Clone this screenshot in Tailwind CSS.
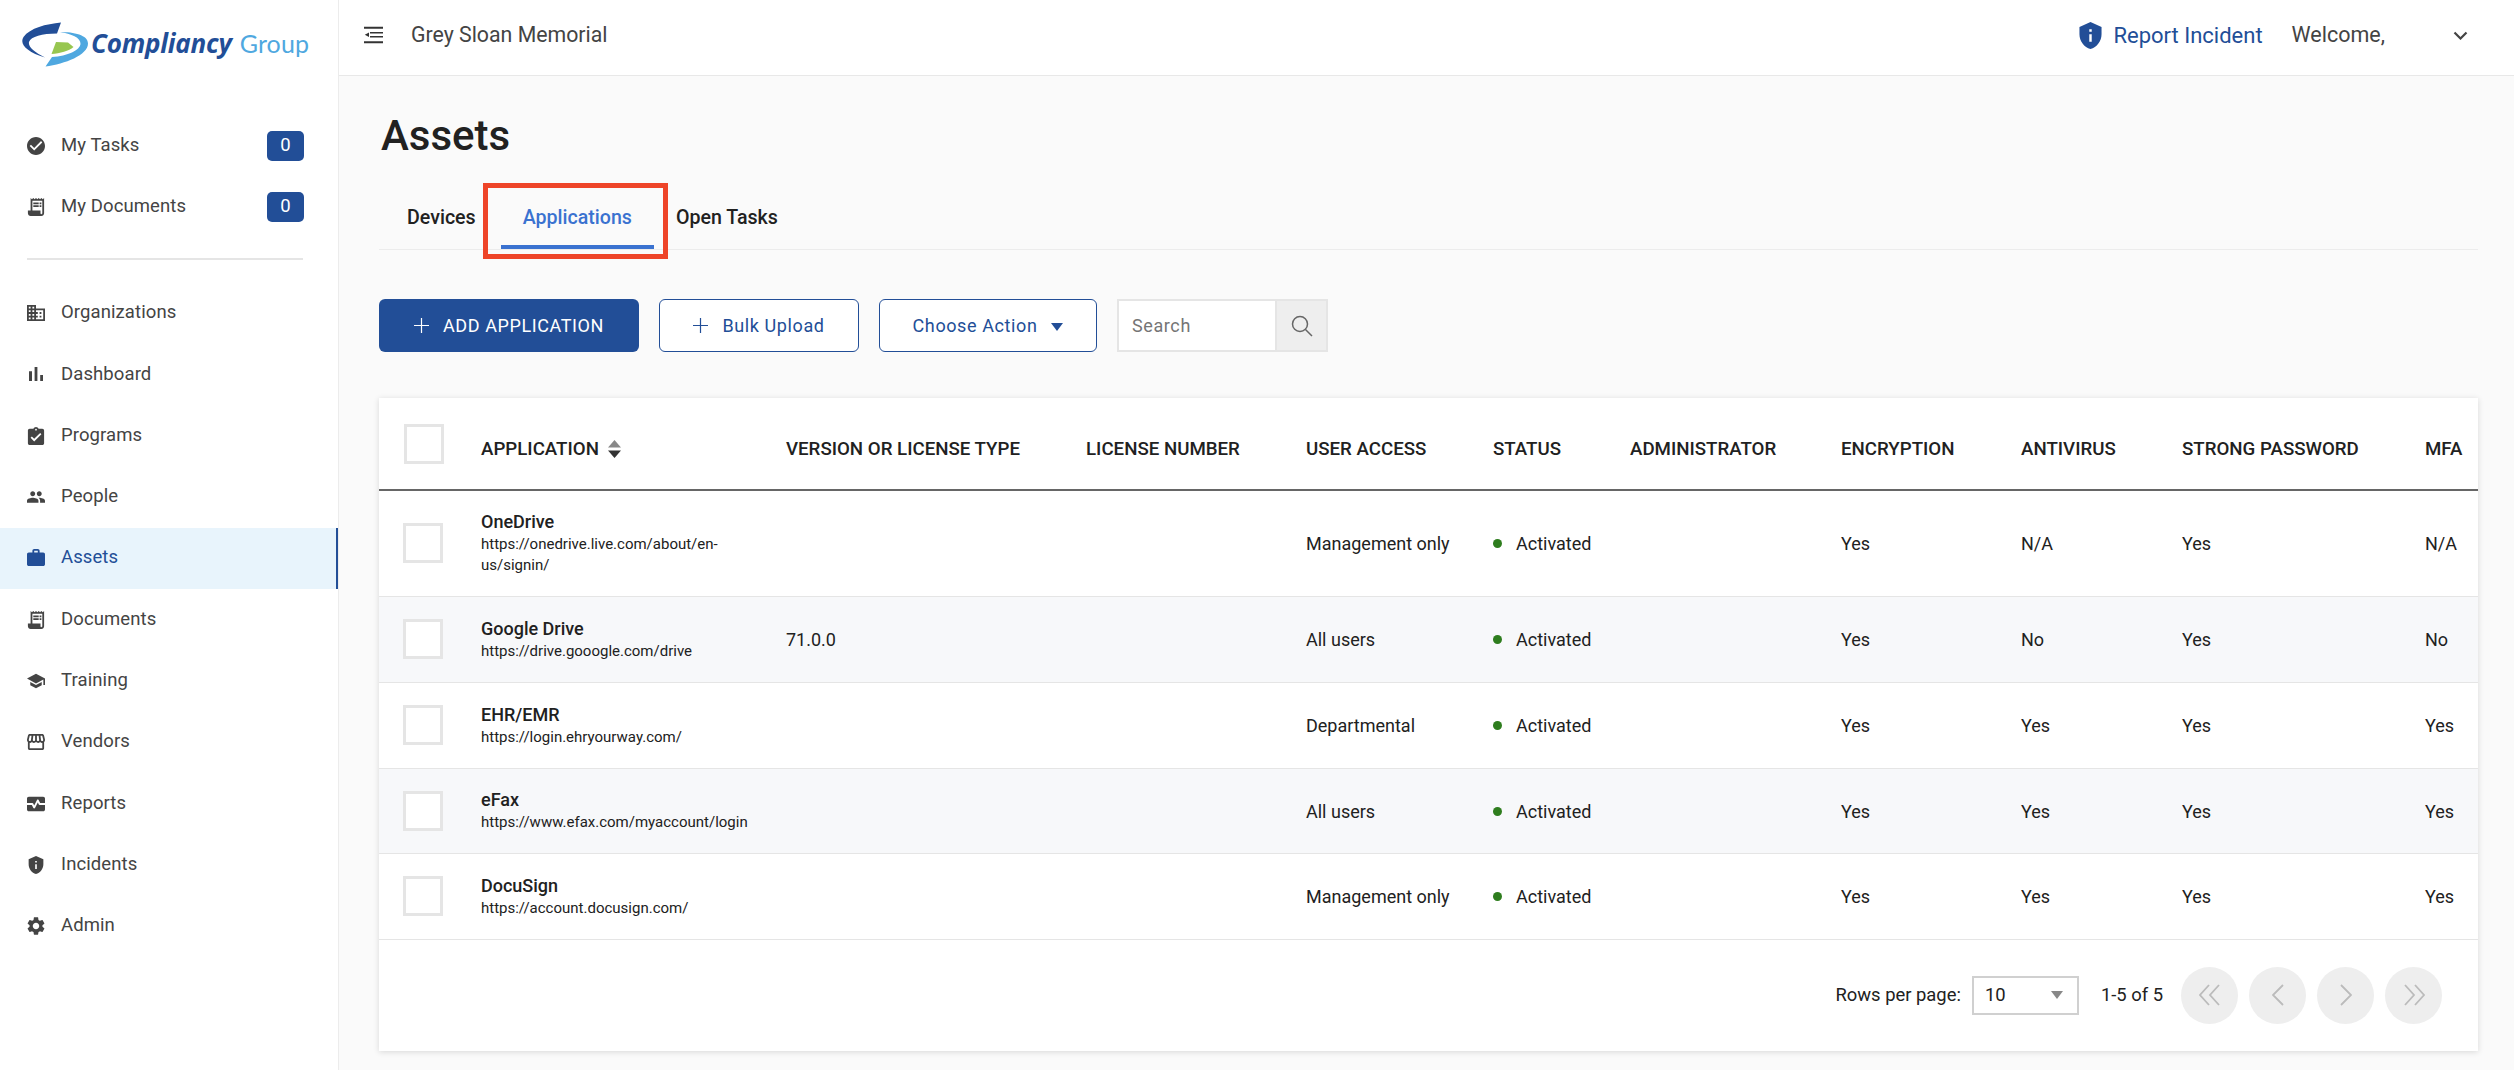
<!DOCTYPE html>
<html lang="en">
<head>
    <meta charset="UTF-8">
    <meta name="viewport" content="width=device-width, initial-scale=1.0">
    <title>Assets - Applications</title>
    <script src="https://cdn.jsdelivr.net/npm/@tailwindcss/browser@4"></script>
</head>
<body class="flex h-screen overflow-hidden bg-[#fafafa] text-[#212121] font-['Roboto',sans-serif]">
    <!-- sidebar -->
    <aside class="w-[339px] shrink-0 bg-white border-r border-[#ececec] text-[18.500px] tracking-[0.1px] text-[#444]">
        <div class="h-[76px] flex items-center pl-[21px] pt-[13px]">
            <svg class="w-[68px] h-[46px]" viewBox="21 22 68 46">
                <path d="M61 22.500C46 24 30 28 23.500 37C19 44 27 52 45 57.500C34 52 28 47 29 42C31 36.500 42 33.500 57 33.500Z" fill="#224e97"/>
                <path d="M60 32C74 32 88 35 88 43.500C88 55 65 64 45.500 66.500L52 57C68 56 80 50 80.500 44C81 37.500 71 34 60 32Z" fill="#4fa8e0"/>
                <path d="M56 42L68 42.500L73.500 47C69 51 60 53.500 51.500 54Z" fill="#97c650"/>
            </svg>
            <span class="ml-[2px] mb-[3px] text-[26px] leading-none font-bold italic text-[#224e97] font-['Open_Sans',sans-serif] tracking-[-0.2px]">Compliancy</span>
            <span class="ml-[8px] mb-[3px] text-[25px] leading-none text-[#4fa8e0] font-['Lato',sans-serif]">Group</span>
        </div>
        <nav class="pt-[39px]">
            <a class="h-[61px] flex items-center pl-[27px] pr-[34px]">
                <svg class="w-[18px] h-[18px] fill-[#444]" viewBox="2 2 20 20"><path d="M12 2C6.480 2 2 6.480 2 12s4.480 10 10 10 10-4.480 10-10S17.520 2 12 2zm-2 15l-5-5 1.410-1.410L10 14.170l7.590-7.590L19 8l-9 9z"/></svg>
                <span class="ml-[16px]">My Tasks</span>
                <span class="ml-auto w-[37px] h-[30px] rounded-[5px] bg-[#224e97] text-white flex items-center justify-center">0</span>
            </a>
            <a class="h-[61px] flex items-center pl-[27px] pr-[34px]">
                <svg class="w-[18px] h-[18px] fill-[#444]" viewBox="3 2 18 20"><path d="M19.500 3.500L18 2l-1.500 1.500L15 2l-1.500 1.500L12 2l-1.500 1.500L9 2 7.500 3.500 6 2v14H3v3c0 1.660 1.340 3 3 3h12c1.660 0 3-1.340 3-3V2l-1.500 1.500zM19 19c0 .55-.45 1-1 1s-1-.45-1-1v-3H8V5h11v14z"/><path d="M9 7h6v2H9zm7 0h2v2h-2zM9 10h6v2H9zm7 0h2v2h-2z"/></svg>
                <span class="ml-[16px]">My Documents</span>
                <span class="ml-auto w-[37px] h-[30px] rounded-[5px] bg-[#224e97] text-white flex items-center justify-center">0</span>
            </a>
            <div class="mt-[21px] mb-[22.500px] ml-[27px] mr-[35px] h-[2px] bg-[#e5e5e5]"></div>
            <a class="h-[61.300px] flex items-center pl-[27px]">
                <svg class="w-[18px] h-[18px] fill-[#444]" viewBox="2 3 20 18"><path d="M12 7V3H2v18h20V7H12zM6 19H4v-2h2v2zm0-4H4v-2h2v2zm0-4H4V9h2v2zm0-4H4V5h2v2zm4 12H8v-2h2v2zm0-4H8v-2h2v2zm0-4H8V9h2v2zm0-4H8V5h2v2zm10 12h-8v-2h2v-2h-2v-2h2v-2h-2V9h8v10zm-2-8h-2v2h2v-2zm0 4h-2v2h2v-2z"/></svg>
                <span class="ml-[16px]">Organizations</span>
            </a>
            <a class="h-[61.300px] flex items-center pl-[27px]">
                <svg class="w-[18px] h-[18px] fill-[#444]" viewBox="3 3 18 18"><path d="M5 9.200h3V19H5zM10.600 5h2.800v14h-2.800zm5.600 8H19v6h-2.800z"/></svg>
                <span class="ml-[16px]">Dashboard</span>
            </a>
            <a class="h-[61.300px] flex items-center pl-[27px]">
                <svg class="w-[18px] h-[18px] fill-[#444]" viewBox="2 1 20 20"><path d="M19 3h-4.180C14.400 1.840 13.300 1 12 1c-1.300 0-2.400.84-2.820 2H5c-1.100 0-2 .9-2 2v14c0 1.100.9 2 2 2h14c1.100 0 2-.9 2-2V5c0-1.100-.9-2-2-2zm-7 0c.55 0 1 .45 1 1s-.45 1-1 1-1-.45-1-1 .45-1 1-1zm-2 14l-4-4 1.410-1.410L10 14.170l6.590-6.590L18 9l-8 8z"/></svg>
                <span class="ml-[16px]">Programs</span>
            </a>
            <a class="h-[61.300px] flex items-center pl-[27px]">
                <svg class="w-[18px] h-[18px] fill-[#444]" viewBox="1 3 22 18"><path d="M16 11c1.660 0 2.990-1.340 2.990-3S17.660 5 16 5c-1.660 0-3 1.340-3 3s1.340 3 3 3zm-8 0c1.660 0 2.990-1.340 2.990-3S9.660 5 8 5C6.340 5 5 6.340 5 8s1.340 3 3 3zm0 2c-2.330 0-7 1.170-7 3.500V19h14v-2.500c0-2.330-4.670-3.500-7-3.500zm8 0c-.29 0-.62.02-.97.05 1.160.84 1.970 1.970 1.970 3.450V19h6v-2.500c0-2.330-4.670-3.500-7-3.500z"/></svg>
                <span class="ml-[16px]">People</span>
            </a>
            <a class="h-[61.300px] flex items-center pl-[27px] bg-[#e8f4fc] border-r-[2px] border-[#224e97] text-[#224e97]">
                <svg class="w-[18px] h-[18px] fill-[#224e97]" viewBox="2 2 20 20"><path d="M20 6h-4V4c0-1.110-.89-2-2-2h-4c-1.110 0-2 .89-2 2v2H4c-1.110 0-1.990.89-1.990 2L2 19c0 1.110.89 2 2 2h16c1.110 0 2-.89 2-2V8c0-1.110-.89-2-2-2zm-6 0h-4V4h4v2z"/></svg>
                <span class="ml-[16px]">Assets</span>
            </a>
            <a class="h-[61.300px] flex items-center pl-[27px]">
                <svg class="w-[18px] h-[18px] fill-[#444]" viewBox="3 2 18 20"><path d="M19.500 3.500L18 2l-1.500 1.500L15 2l-1.500 1.500L12 2l-1.500 1.500L9 2 7.500 3.500 6 2v14H3v3c0 1.660 1.340 3 3 3h12c1.660 0 3-1.340 3-3V2l-1.500 1.500zM19 19c0 .55-.45 1-1 1s-1-.45-1-1v-3H8V5h11v14z"/><path d="M9 7h6v2H9zm7 0h2v2h-2zM9 10h6v2H9zm7 0h2v2h-2z"/></svg>
                <span class="ml-[16px]">Documents</span>
            </a>
            <a class="h-[61.300px] flex items-center pl-[27px]">
                <svg class="w-[18px] h-[18px] fill-[#444]" viewBox="1 3 22 18"><path d="M5 13.180v4L12 21l7-3.820v-4L12 17l-7-3.820zM12 3L1 9l11 6 9-4.910V17h2V9L12 3z"/></svg>
                <span class="ml-[16px]">Training</span>
            </a>
            <a class="h-[61.300px] flex items-center pl-[27px]">
                <svg class="w-[18px] h-[18px] fill-[#444]" viewBox="2 3 20 18"><path d="M21.900 8.890l-1.050-4.370c-.22-.9-1-1.520-1.910-1.520H5.050c-.9 0-1.690.63-1.900 1.520L2.100 8.890c-.24 1.020-.02 2.060.62 2.880.08.11.19.19.28.29V19c0 1.100.9 2 2 2h14c1.100 0 2-.9 2-2v-6.940c.09-.09.2-.18.28-.28.64-.82.87-1.870.62-2.890zM18.910 4.990l1.050 4.370c.1.42.01.84-.25 1.170-.14.18-.44.47-.94.47-.61 0-1.140-.49-1.210-1.140L16.980 5l1.930-.01zM13 5h1.960l.54 4.520c.05.39-.07.78-.33 1.070-.22.26-.54.41-.95.41-.67 0-1.220-.59-1.220-1.310V5zM8.490 9.520L9.040 5H11v4.690c0 .72-.55 1.310-1.290 1.310-.34 0-.65-.15-.89-.41-.25-.29-.37-.68-.33-1.070zm-4.450-.16L5.050 5h1.970l-.58 4.860c-.08.65-.6 1.140-1.210 1.140-.49 0-.8-.29-.93-.47-.27-.32-.36-.75-.26-1.170zM5 19v-6.030c.08.01.15.03.23.03.87 0 1.660-.36 2.240-.95.6.6 1.400.95 2.310.95.87 0 1.650-.36 2.230-.93.59.57 1.390.93 2.290.93.84 0 1.640-.35 2.240-.95.58.59 1.370.95 2.240.95.08 0 .15-.02.23-.03V19H5z"/></svg>
                <span class="ml-[16px]">Vendors</span>
            </a>
            <a class="h-[61.300px] flex items-center pl-[27px]">
                <svg class="w-[18px] h-[18px] fill-[#444]" viewBox="2 3 20 18"><path d="M15.110 12.450L14 10.240l-3.110 6.210c-.16.34-.51.55-.89.55s-.73-.21-.89-.55L7.380 13H2v5c0 1.100.9 2 2 2h16c1.100 0 2-.9 2-2v-5h-6c-.38 0-.73-.21-.89-.55zM20 4H4c-1.100 0-2 .9-2 2v5h6c.38 0 .73.21.89.55L10 13.760l3.110-6.210c.34-.68 1.450-.68 1.790 0L16.620 11H22V6c0-1.100-.9-2-2-2z"/></svg>
                <span class="ml-[16px]">Reports</span>
            </a>
            <a class="h-[61.300px] flex items-center pl-[27px]">
                <svg class="w-[18px] h-[18px] fill-[#444]" viewBox="2 1 20 22"><path fill-rule="evenodd" d="M12 1L3 5v6c0 5.550 3.840 10.740 9 12 5.160-1.260 9-6.450 9-12V5l-9-4zM11 7h2v2h-2zm0 4h2v6h-2z"/></svg>
                <span class="ml-[16px]">Incidents</span>
            </a>
            <a class="h-[61.300px] flex items-center pl-[27px]">
                <svg class="w-[18px] h-[18px] fill-[#444]" viewBox="2.500 2 19 20"><path d="M19.140 12.940c.04-.3.06-.61.06-.94 0-.32-.02-.64-.07-.94l2.030-1.580c.18-.14.23-.41.12-.61l-1.920-3.320c-.12-.22-.37-.29-.59-.22l-2.390.96c-.5-.38-1.030-.7-1.620-.94l-.36-2.540c-.04-.24-.24-.41-.48-.41h-3.840c-.24 0-.43.17-.47.41l-.36 2.540c-.59.24-1.130.57-1.620.94l-2.390-.96c-.22-.08-.47 0-.59.22L2.740 8.870c-.12.21-.08.47.12.61l2.030 1.580c-.05.3-.09.63-.09.94s.02.64.07.94l-2.030 1.580c-.18.14-.23.41-.12.61l1.920 3.320c.12.22.37.29.59.22l2.390-.96c.5.38 1.030.7 1.620.94l.36 2.540c.05.24.24.41.48.41h3.840c.24 0 .44-.17.47-.41l.36-2.540c.59-.24 1.130-.56 1.620-.94l2.390.96c.22.08.47 0 .59-.22l1.920-3.320c.12-.22.07-.47-.12-.61l-2.010-1.580zM12 15.600c-1.980 0-3.600-1.620-3.600-3.600s1.620-3.600 3.600-3.600 3.600 1.620 3.600 3.600-1.620 3.600-3.600 3.600z"/></svg>
                <span class="ml-[16px]">Admin</span>
            </a>
        </nav>
    </aside>

    <div class="flex-1 min-w-0 flex flex-col">
        <!-- top bar -->
        <header class="h-[76px] shrink-0 bg-white border-b border-[#e8e8e8] flex items-center pl-[25px] pr-[46px] pb-[5px] text-[21.500px] text-[#444]">
            <svg class="w-[19px] h-[18px]" viewBox="0 0 19 18"><path d="M0 .750h19v2H0zM6 6h13v1.500H6zM6 10h13v1.500H6zM0 15.250h19v2H0zM5 6.500v4.500L.8 8.750z" fill="#333"/></svg>
            <span class="ml-[28px] text-[21.300px]">Grey Sloan Memorial</span>
            <svg class="ml-auto w-[23px] h-[27px] fill-[#224e97]" viewBox="3 1 18 22"><path fill-rule="evenodd" d="M12 1L3 5v6c0 5.550 3.840 10.740 9 12 5.160-1.260 9-6.450 9-12V5l-9-4zM11 7h2v2h-2zm0 4h2v6h-2z"/></svg>
            <span class="ml-[11px] text-[22px] text-[#224e97]">Report Incident</span>
            <span class="ml-[29px] mr-[68px]">Welcome,</span>
            <svg class="w-[15px] h-[9px]" viewBox="0 0 14 9"><path d="M1 1.500L7 7.500L13 1.500" fill="none" stroke="#444" stroke-width="2.200"/></svg>
        </header>

        <main class="flex-1 min-h-0 pl-[40px] pr-[36px]">
            <h1 class="pt-[36px] pl-[2px] text-[42px] leading-[48px] font-medium text-[#212121]">Assets</h1>

            <!-- tabs -->
            <div class="relative h-[90px] flex border-b border-[#ececec] pl-[28px] text-[19.600px] font-medium leading-[24px]">
                <a class="pt-[46px]">Devices</a>
                <a class="ml-[25px] px-[22px] pt-[46px] border-b-[4px] border-[#3a72d0] text-[#3a72d0]">Applications</a>
                <a class="ml-[22px] pt-[46px]">Open Tasks</a>
                <div class="absolute left-[104px] top-[23px] w-[185px] h-[76px] border-[5px] border-[#ee4428]"></div>
            </div>

            <!-- toolbar -->
            <div class="mt-[49px] h-[53px] flex gap-[20px] text-[18px] tracking-[0.6px]">
                <button class="w-[260px] rounded-[6px] bg-[#224e97] text-white flex items-center justify-center">
                    <svg class="w-[15px] h-[15px]" viewBox="0 0 15 15"><path d="M7.500 0v15M0 7.500h15" stroke="#fff" stroke-width="1.200"/></svg>
                    <span class="ml-[14px] text-[18px]">ADD APPLICATION</span>
                </button>
                <button class="w-[200px] rounded-[6px] border border-[#224e97] bg-white text-[#224e97] flex items-center justify-center">
                    <svg class="w-[15px] h-[15px]" viewBox="0 0 15 15"><path d="M7.500 0v15M0 7.500h15" stroke="#224e97" stroke-width="1.200"/></svg>
                    <span class="ml-[14px]">Bulk Upload</span>
                </button>
                <button class="w-[218px] rounded-[6px] border border-[#224e97] bg-white text-[#224e97] flex items-center justify-center">
                    <span>Choose Action</span>
                    <svg class="ml-[14px] mt-[3px] w-[12px] h-[8px]" viewBox="0 0 12 8"><path d="M0 0h12L6 8z" fill="#224e97"/></svg>
                </button>
                <div class="w-[211px] flex border-2 border-[#e5e5e5] bg-white">
                    <span class="flex-1 pl-[13px] self-center text-[18px] text-[#757575]">Search</span>
                    <span class="w-[51px] bg-[#eee] flex items-center justify-center border-l-2 border-[#e5e5e5]">
                        <svg class="w-[24px] h-[24px]" viewBox="0 0 24 24" fill="none" stroke="#666" stroke-width="1.500"><circle cx="10" cy="10" r="7.500"/><path d="M15.500 15.500L22 22"/></svg>
                    </span>
                </div>
            </div>

            <!-- table card -->
            <div class="mt-[46px] h-[653px] bg-white shadow-[0_1px_6px_rgba(0,0,0,0.14)] flex flex-col">
                <table class="w-[2099px] table-fixed border-collapse text-[18px]">
                    <colgroup>
                        <col class="w-[102px]"><col class="w-[305px]"><col class="w-[300px]"><col class="w-[220px]"><col class="w-[187px]"><col class="w-[137px]"><col class="w-[211px]"><col class="w-[180px]"><col class="w-[161px]"><col class="w-[243px]"><col class="w-[53px]">
                    </colgroup>
                    <thead>
                        <tr class="h-[92px] border-b-2 border-[#666] text-left text-[18.700px] [&>th:not(:first-child)]:pt-[12px]">
                            <th class="pl-[25px] font-medium"><div class="w-[40px] h-[40px] border-[3px] border-[#e5e5e5] bg-white"></div></th>
                            <th class="font-medium">
                                <span class="flex items-center">APPLICATION
                                    <svg class="ml-[9px] w-[13px] h-[18px]" viewBox="0 0 13 18"><path d="M6.500 0L13 7.500H0z" fill="#888"/><path d="M6.500 18L13 10.500H0z" fill="#333"/></svg>
                                </span>
                            </th>
                            <th class="font-medium">VERSION OR LICENSE TYPE</th>
                            <th class="font-medium">LICENSE NUMBER</th>
                            <th class="font-medium">USER ACCESS</th>
                            <th class="font-medium">STATUS</th>
                            <th class="font-medium">ADMINISTRATOR</th>
                            <th class="font-medium">ENCRYPTION</th>
                            <th class="font-medium">ANTIVIRUS</th>
                            <th class="font-medium">STRONG PASSWORD</th>
                            <th class="font-medium">MFA</th>
                        </tr>
                    </thead>
                    <tbody>
                        <tr class="h-[106px] border-b border-[#e5e5e5] [&>td:not(:first-child)]:pt-[1px]">
                            <td class="pl-[24px]"><div class="w-[40px] h-[40px] border-[3px] border-[#e5e5e5] bg-white"></div></td>
                            <td class="pr-[30px]">
                                <div class="font-medium leading-[22px]">OneDrive</div>
                                <div class="text-[15px] leading-[21px] mt-[1px]">https://onedrive.live.com/about/en-us/signin/</div>
                            </td>
                            <td></td><td></td>
                            <td>Management only</td>
                            <td><span class="flex items-center"><i class="w-[9px] h-[9px] rounded-full bg-[#2e7d1e] mr-[14px]"></i>Activated</span></td>
                            <td></td>
                            <td>Yes</td><td>N/A</td><td>Yes</td><td>N/A</td>
                        </tr>
                        <tr class="h-[86px] border-b border-[#e5e5e5] bg-[#f7f8fa] [&>td:not(:first-child)]:pt-[1px]">
                            <td class="pl-[24px]"><div class="w-[40px] h-[40px] border-[3px] border-[#e5e5e5] bg-white"></div></td>
                            <td>
                                <div class="font-medium leading-[22px]">Google Drive</div>
                                <div class="text-[15px] leading-[21px] mt-[1px]">https://drive.gooogle.com/drive</div>
                            </td>
                            <td>71.0.0</td><td></td>
                            <td>All users</td>
                            <td><span class="flex items-center"><i class="w-[9px] h-[9px] rounded-full bg-[#2e7d1e] mr-[14px]"></i>Activated</span></td>
                            <td></td>
                            <td>Yes</td><td>No</td><td>Yes</td><td>No</td>
                        </tr>
                        <tr class="h-[86px] border-b border-[#e5e5e5] [&>td:not(:first-child)]:pt-[1px]">
                            <td class="pl-[24px]"><div class="w-[40px] h-[40px] border-[3px] border-[#e5e5e5] bg-white"></div></td>
                            <td>
                                <div class="font-medium leading-[22px]">EHR/EMR</div>
                                <div class="text-[15px] leading-[21px] mt-[1px]">https://login.ehryourway.com/</div>
                            </td>
                            <td></td><td></td>
                            <td>Departmental</td>
                            <td><span class="flex items-center"><i class="w-[9px] h-[9px] rounded-full bg-[#2e7d1e] mr-[14px]"></i>Activated</span></td>
                            <td></td>
                            <td>Yes</td><td>Yes</td><td>Yes</td><td>Yes</td>
                        </tr>
                        <tr class="h-[85px] border-b border-[#e5e5e5] bg-[#f7f8fa] [&>td:not(:first-child)]:pt-[1px]">
                            <td class="pl-[24px]"><div class="w-[40px] h-[40px] border-[3px] border-[#e5e5e5] bg-white"></div></td>
                            <td>
                                <div class="font-medium leading-[22px]">eFax</div>
                                <div class="text-[15px] leading-[21px] mt-[1px]">https://www.efax.com/myaccount/login</div>
                            </td>
                            <td></td><td></td>
                            <td>All users</td>
                            <td><span class="flex items-center"><i class="w-[9px] h-[9px] rounded-full bg-[#2e7d1e] mr-[14px]"></i>Activated</span></td>
                            <td></td>
                            <td>Yes</td><td>Yes</td><td>Yes</td><td>Yes</td>
                        </tr>
                        <tr class="h-[86px] border-b border-[#e5e5e5] [&>td:not(:first-child)]:pt-[1px]">
                            <td class="pl-[24px]"><div class="w-[40px] h-[40px] border-[3px] border-[#e5e5e5] bg-white"></div></td>
                            <td>
                                <div class="font-medium leading-[22px]">DocuSign</div>
                                <div class="text-[15px] leading-[21px] mt-[1px]">https://account.docusign.com/</div>
                            </td>
                            <td></td><td></td>
                            <td>Management only</td>
                            <td><span class="flex items-center"><i class="w-[9px] h-[9px] rounded-full bg-[#2e7d1e] mr-[14px]"></i>Activated</span></td>
                            <td></td>
                            <td>Yes</td><td>Yes</td><td>Yes</td><td>Yes</td>
                        </tr>
                    </tbody>
                </table>

                <!-- pagination -->
                <div class="flex-1 flex items-center justify-end pr-[36px] text-[18.400px]">
                    <span>Rows per page:</span>
                    <div class="ml-[11px] w-[107px] h-[39px] border-2 border-[#d0d0d0] flex items-center pl-[11px] pr-[14px]">
                        <span>10</span>
                        <svg class="ml-auto w-[12px] h-[8px]" viewBox="0 0 12 8"><path d="M0 0h12L6 8z" fill="#888"/></svg>
                    </div>
                    <span class="ml-[22px]">1-5 of 5</span>
                    <span class="ml-[18px] w-[57px] h-[57px] rounded-full bg-[#eee] flex items-center justify-center">
                        <svg class="w-[22px] h-[22px]" viewBox="0 0 22 22" fill="none" stroke="#bbb" stroke-width="1.800"><path d="M10 1L1 11l9 10M20 1l-9 10 9 10"/></svg>
                    </span>
                    <span class="ml-[11px] w-[57px] h-[57px] rounded-full bg-[#eee] flex items-center justify-center">
                        <svg class="w-[12px] h-[22px]" viewBox="0 0 12 22" fill="none" stroke="#bbb" stroke-width="1.800"><path d="M11 1L1 11l10 10"/></svg>
                    </span>
                    <span class="ml-[11px] w-[57px] h-[57px] rounded-full bg-[#eee] flex items-center justify-center">
                        <svg class="w-[12px] h-[22px]" viewBox="0 0 12 22" fill="none" stroke="#bbb" stroke-width="1.800"><path d="M1 1l10 10L1 21"/></svg>
                    </span>
                    <span class="ml-[11px] w-[57px] h-[57px] rounded-full bg-[#eee] flex items-center justify-center">
                        <svg class="w-[22px] h-[22px]" viewBox="0 0 22 22" fill="none" stroke="#bbb" stroke-width="1.800"><path d="M2 1l9 10-9 10M12 1l9 10-9 10"/></svg>
                    </span>
                </div>
            </div>
        </main>
    </div>
</body>
</html>
